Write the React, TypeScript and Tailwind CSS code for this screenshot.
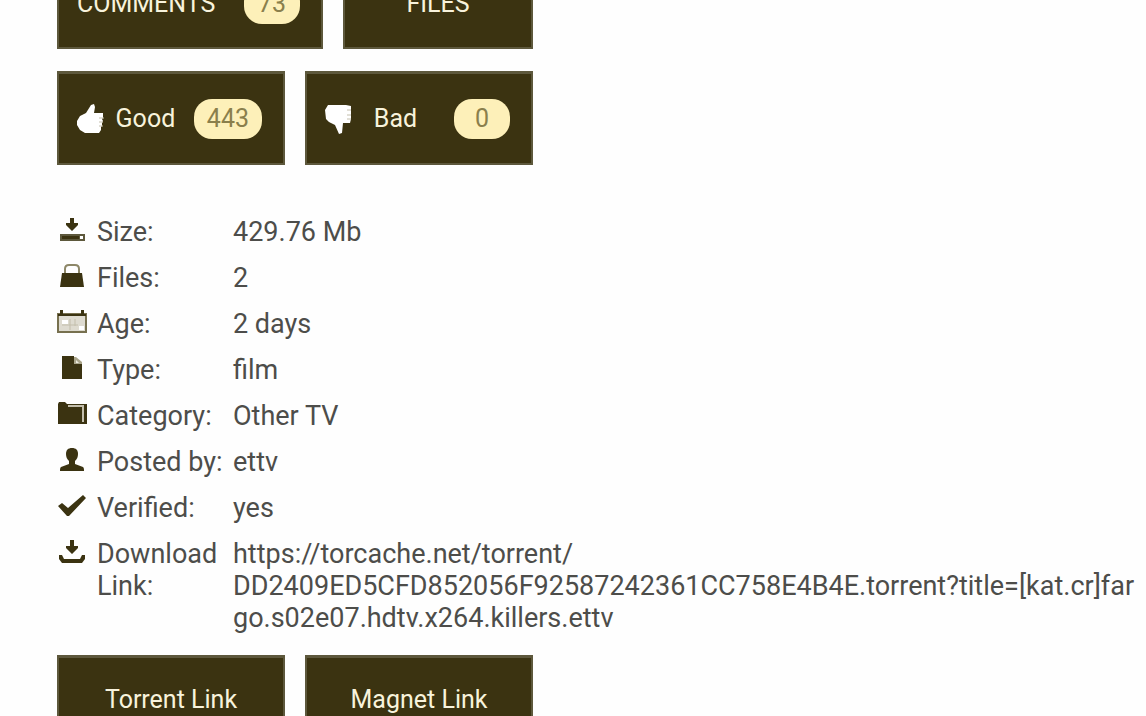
import type { ReactNode } from "react";

const INK = "#3b3311";

const icons = {
  size: (
    <>
      <path d="M13 0h4v5h4v2l-6 6-6-6V5h4z" />
      <path d="M3 16h25v7H3z" fill="#5d583c" />
      <path d="M5 18h17v3H5z" fill={INK} />
      <path d="M23 18h3v3h-3z" fill="#fff" />
    </>
  ),
  files: (
    <>
      <path d="M8 10V5q0-4 4-4h6q4 0 4 4v5" fill="none" stroke="#8d8768" strokeWidth="2" />
      <path d="M5 9h20l2 14H3z" />
    </>
  ),
  age: (
    <>
      <path d="M1 4h28v18H1z" fill="#dedbd0" stroke="#77704f" strokeWidth="2" />
      <path d="M3 0h3v4h18V0h3v4h2v2H1V4h2z" />
      <path d="M5 10h6v4H5zM22 16h5v4h-5z" fill="#fff" />
      <path d="M5 15h16M13 9v11M18 9v7" stroke="#c3beac" />
    </>
  ),
  type: (
    <>
      <path d="M5 0h12v8h8v15H5z" />
      <path d="M17 1h2l6 5v2h-8z" fill="#aaa58b" />
      <path d="M19 4l3 3h-3z" fill="#eeecdf" />
    </>
  ),
  category: (
    <>
      <path d="M1 2l1-2h6l2 2h20v20H1z" />
      <path d="M11 4h15v16" fill="none" stroke="#c3beac" strokeWidth="2" />
    </>
  ),
  user: <path d="M15 0c4 0 6 2 6 6 0 3-1 5-3 7v3l8 3c1 1 1 2 1 4H3c0-2 0-3 1-4l8-3v-3c-2-2-3-4-3-7 0-4 2-6 6-6z" />,
  check: <path d="M1 12l4-3 6 5L26 1l3 3-17 18h-2z" />,
  download: (
    <>
      <path d="M13 0h4v6h4v2l-6 6-6-6V6h4z" />
      <path d="M2 15h3l2 4h16l2-4h3v4l-3 4H5l-3-4z" />
    </>
  ),
};

type Row = { icon: keyof typeof icons; label: string; value: string };

const rows: Row[] = [
  { icon: "size", label: "Size:", value: "429.76 Mb" },
  { icon: "files", label: "Files:", value: "2" },
  { icon: "age", label: "Age:", value: "2 days" },
  { icon: "type", label: "Type:", value: "film" },
  { icon: "category", label: "Category:", value: "Other TV" },
  { icon: "user", label: "Posted by:", value: "ettv" },
  { icon: "check", label: "Verified:", value: "yes" },
];

const linkParts = [
  "https://torcache.net/torrent/",
  "DD2409ED5CFD852056F92587242361CC758E4B4E.torrent?title=[kat.cr]far",
  "go.s02e07.hdtv.x264.killers.ettv",
];

const buttonBase =
  "flex items-center border-2 border-t-3 border-[#5d583c] bg-[#3b3311] text-[25px] text-[#f8f3dc]";

function Badge({ children }: { children: ReactNode }) {
  return (
    <span className="flex h-10 min-w-14 items-center justify-center rounded-[18px] bg-[#fdf0b9] px-[13px] text-[#8a7f4c]">
      {children}
    </span>
  );
}

function InfoRow({ icon, label, children }: { icon: Row["icon"]; label: string; children: ReactNode }) {
  return (
    <tr className="align-top">
      <td className="w-10 pt-[2px]">
        <svg viewBox="0 0 30 24" width="30" height="24" fill={INK} aria-hidden="true">
          {icons[icon]}
        </svg>
      </td>
      <th scope="row" className="w-[136px] pb-[14px] text-left font-normal">
        {label}
      </th>
      <td className="pb-[14px] whitespace-nowrap">{children}</td>
    </tr>
  );
}

export default function App() {
  return (
    <div className="h-screen overflow-hidden bg-[#fefefe] font-['Roboto',sans-serif] text-[27px] leading-8 text-[#4d4d4a]">
      <main className="-mt-[43px] pl-[57px]">
        <div className="flex gap-5">
          <button type="button" className={`${buttonBase} h-[92px] w-[266px] justify-between pr-[21px] pl-[18px]`}>
            COMMENTS <Badge>73</Badge>
          </button>
          <button type="button" className={`${buttonBase} h-[92px] w-[190px] justify-center`}>
            FILES
          </button>
        </div>

        <div className="mt-[22px] flex gap-5">
          <button type="button" className={`${buttonBase} h-[94px] w-[228px] pr-[21px] pl-[18px]`}>
            <svg viewBox="0 0 28 30" width="28" height="30" fill="#fff" aria-hidden="true">
              <path d="M0 17l3-5 6-3 5-8 3-1 1 3-1 6h9v5l-1 1 1 2-1 2v3l-1 1v3l-2 3H8l-5-3-3-5z" />
              <path d="M22 14h5M22 18h4M22 22h4" stroke="#c3beac" />
            </svg>
            <span className="flex-1 pr-2">Good</span>
            <Badge>443</Badge>
          </button>
          <button type="button" className={`${buttonBase} h-[94px] w-[228px] pr-[21px] pl-[18px]`}>
            <svg viewBox="0 0 28 30" width="28" height="30" fill="#fff" aria-hidden="true">
              <path d="M0 6l3-5h18l5 1v13l-1 4h-7l-1 10-3 1-4-9-6-3-3-3z" />
              <path d="M22 6h4M22 11h4M22 15h4" stroke="#c3beac" />
            </svg>
            <span className="flex-1 pr-4">Bad</span>
            <Badge>0</Badge>
          </button>
        </div>

        <table className="mt-[51px] w-full table-fixed border-collapse">
          <tbody>
            {rows.map((row) => (
              <InfoRow key={row.label} icon={row.icon} label={row.label}>
                {row.value}
              </InfoRow>
            ))}
            <InfoRow icon="download" label="Download Link:">
              <a href={linkParts.join("")}>
                {linkParts.map((part) => (
                  <span key={part} className="block">
                    {part}
                  </span>
                ))}
              </a>
            </InfoRow>
          </tbody>
        </table>

        <div className="mt-[7px] flex gap-5">
          <button type="button" className={`${buttonBase} h-[88px] w-[228px] justify-center`}>
            Torrent Link
          </button>
          <button type="button" className={`${buttonBase} h-[88px] w-[228px] justify-center`}>
            Magnet Link
          </button>
        </div>
      </main>
    </div>
  );
}
